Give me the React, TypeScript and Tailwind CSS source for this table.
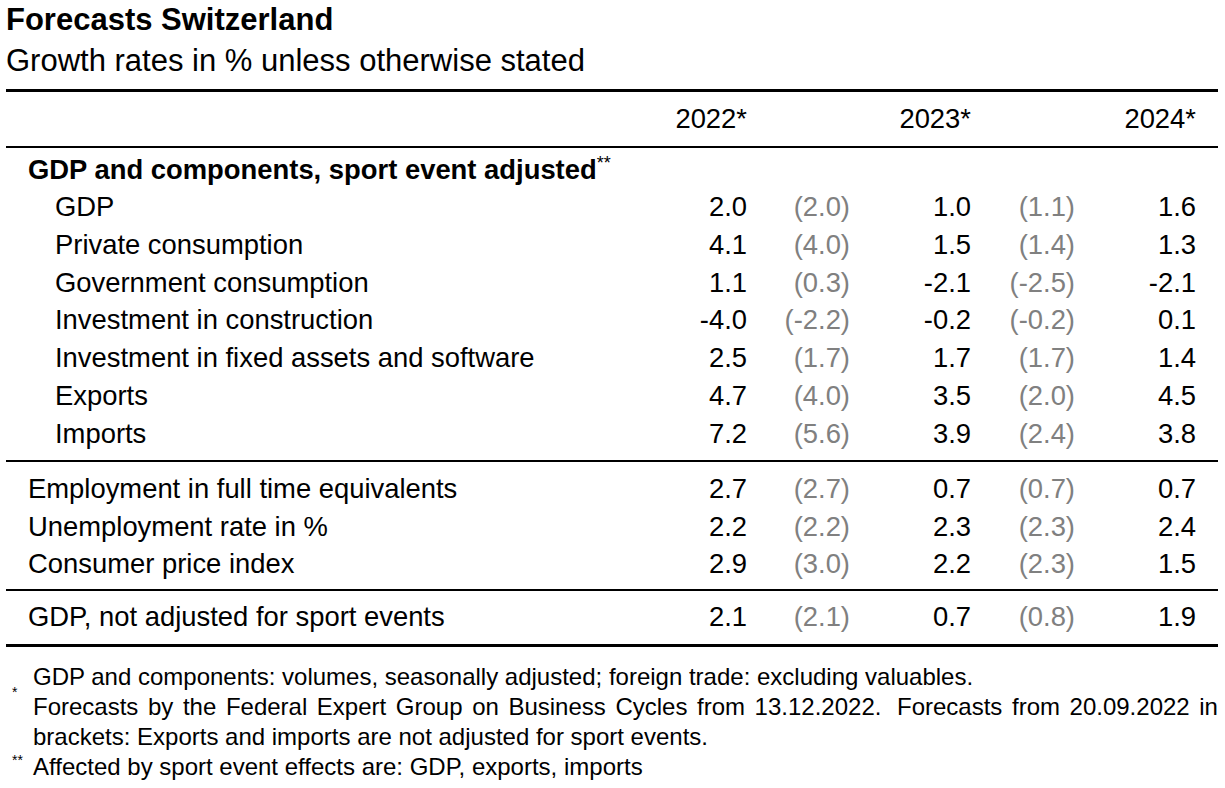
import React from "react";

type R = [string, string, string, string, string, string];

const gdpRows: R[] = [
  ["GDP", "2.0", "(2.0)", "1.0", "(1.1)", "1.6"],
  ["Private consumption", "4.1", "(4.0)", "1.5", "(1.4)", "1.3"],
  ["Government consumption", "1.1", "(0.3)", "-2.1", "(-2.5)", "-2.1"],
  ["Investment in construction", "-4.0", "(-2.2)", "-0.2", "(-0.2)", "0.1"],
  ["Investment in fixed assets and software", "2.5", "(1.7)", "1.7", "(1.7)", "1.4"],
  ["Exports", "4.7", "(4.0)", "3.5", "(2.0)", "4.5"],
  ["Imports", "7.2", "(5.6)", "3.9", "(2.4)", "3.8"],
];

const labourRows: R[] = [
  ["Employment in full time equivalents", "2.7", "(2.7)", "0.7", "(0.7)", "0.7"],
  ["Unemployment rate in %", "2.2", "(2.2)", "2.3", "(2.3)", "2.4"],
  ["Consumer price index", "2.9", "(3.0)", "2.2", "(2.3)", "1.5"],
];

const grid = "grid grid-cols-[1fr_100px_103px_121px_104px_121px] pr-[22px]";

function Row({ r, indent }: { r: R; indent?: boolean }) {
  return (
    <div className={`${grid} h-[37.83px] items-center leading-[38px]`}>
      <div className={indent ? "pl-[49px]" : "pl-[22px]"}>{r[0]}</div>
      <div className="text-right">{r[1]}</div>
      <div className="text-right text-[#808080]">{r[2]}</div>
      <div className="text-right">{r[3]}</div>
      <div className="text-right text-[#808080]">{r[4]}</div>
      <div className="text-right">{r[5]}</div>
    </div>
  );
}

export default function App() {
  return (
    <div className="w-[1225px] h-[788px] bg-white text-black overflow-hidden font-['Liberation_Sans',Arial,sans-serif]">
      <div className="pl-[6px]">
        <div className="h-[40px] leading-[40px] text-[31px] font-bold">Forecasts Switzerland</div>
        <div className="h-[40px] leading-[40px] text-[31px] mt-[1px]">Growth rates in % unless otherwise stated</div>
      </div>

      <div className="ml-[6px] w-[1212px] mt-[8px] text-[27.4px]">
        <div className="h-[3px] bg-black" />
        <div className={`${grid} h-[54px] items-center leading-[38px]`}>
          <div />
          <div className="text-right">2022*</div>
          <div />
          <div className="text-right">2023*</div>
          <div />
          <div className="text-right">2024*</div>
        </div>
        <div className="h-[2px] bg-black" />
        <div className="h-[40px] flex items-center pl-[22px] font-bold leading-[38px]">
          <span className="relative top-[3px]">
            GDP and components, sport event adjusted
            <span className="relative top-[-10px] text-[18px] font-normal">**</span>
          </span>
        </div>
        {gdpRows.map((r) => (
          <Row key={r[0]} r={r} indent />
        ))}
        <div className="h-[7px]" />
        <div className="h-[2px] bg-black" />
        <div className="h-[8px]" />
        {labourRows.map((r) => (
          <Row key={r[0]} r={r} />
        ))}
        <div className="h-[6px]" />
        <div className="h-[2px] bg-black" />
        <div className="h-[7px]" />
        <Row r={["GDP, not adjusted for sport events", "2.1", "(2.1)", "0.7", "(0.8)", "1.9"]} />
        <div className="h-[8px]" />
        <div className="h-[3px] bg-black" />
      </div>

      <div className="ml-[6px] w-[1212px] mt-[15px] text-[24px] leading-[30px]">
        <div className="grid grid-cols-[27px_1fr]">
          <div />
          <div>GDP and components: volumes, seasonally adjusted; foreign trade: excluding valuables.</div>
          <div className="relative">
            <span className="absolute left-[6px] top-[-7px] text-[14px] leading-[14px]">*</span>
          </div>
          <div>
            <div className="whitespace-nowrap flex justify-between">
              <span>Forecasts</span><span>by</span><span>the</span><span>Federal</span><span>Expert</span><span>Group</span><span>on</span><span>Business</span><span>Cycles</span><span>from</span><span>13.12.2022.</span><span className="pl-[6px]">Forecasts</span><span>from</span><span>20.09.2022</span><span>in</span>
            </div>
            <div>brackets: Exports and imports are not adjusted for sport events.</div>
          </div>
          <div className="relative">
            <span className="absolute left-[6px] top-[1px] text-[14px] leading-[14px]">**</span>
          </div>
          <div>Affected by sport event effects are: GDP, exports, imports</div>
        </div>
      </div>
    </div>
  );
}
